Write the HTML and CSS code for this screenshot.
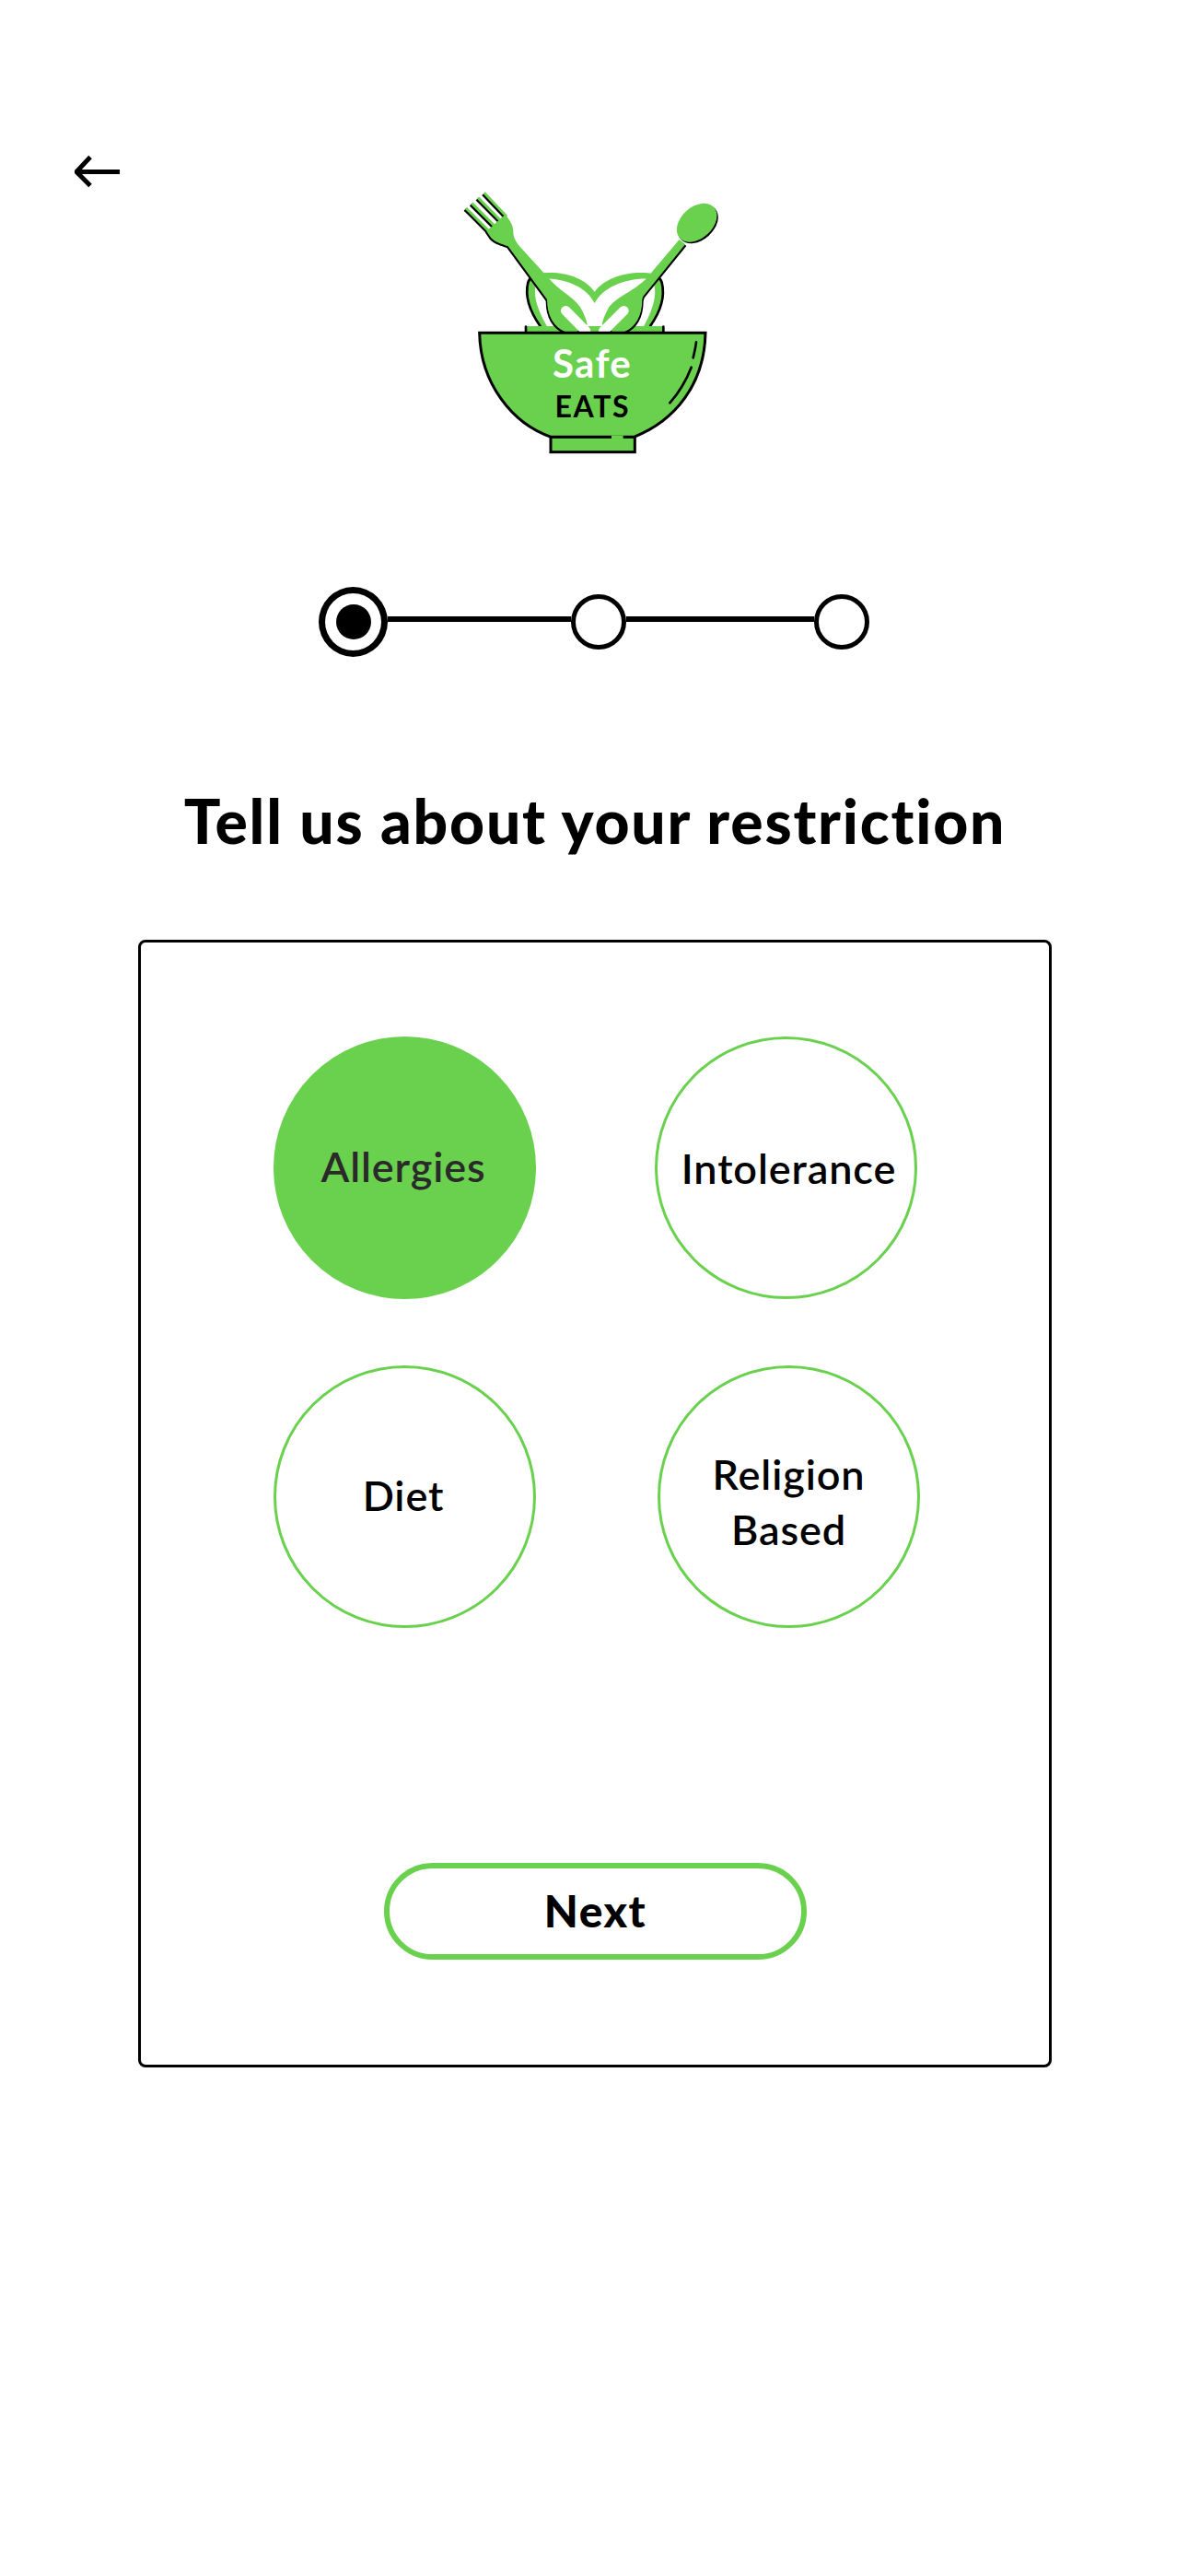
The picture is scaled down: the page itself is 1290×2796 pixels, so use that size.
FILE: index.html
```html
<!DOCTYPE html>
<html lang="en">
<head>
  <meta charset="UTF-8" />
  <meta name="viewport" content="width=device-width, initial-scale=1.0" />
  <title>Safe Eats</title>
  <link rel="stylesheet" href="styles.css">
</head>
<body>
  <header class="top">
    <svg class="back" viewBox="0 0 50 36" aria-label="Back">
      <path d="M2 18.500H49M17 2.500L2 18.500L17 33.500" />
    </svg>

    <svg class="logo" viewBox="0 0 990 960" role="img" aria-label="Safe Eats">
      <!-- leaves behind the bowl -->
      <path class="green" d="M355 505C320 460 300 400 312 350C318 330 340 318 370 318C440 315 500 340 527 380C555 340 620 315 690 318C720 318 742 330 745 350C755 400 735 460 705 505Z" />
      <path class="white" d="M380 505C345 450 322 390 338 350C345 340 360 336 385 338C440 342 500 365 527 417C555 365 620 342 675 338C700 336 712 340 718 350C735 390 712 450 680 505Z" />
      <path class="ink-line" d="M350 492C320 450 298 400 310 350C313 340 318 335 326 330M708 492C738 450 758 400 746 350C743 340 738 335 730 330" />
      <rect class="green" x="305" y="492" width="445" height="20" />
      <path class="ink-line" d="M303 494V512M751 494V512" />

      <!-- fork -->
      <g class="shadow-left">
        <path class="ink-tines" d="M108 108L190 190M127 92L205 170M147 74L220 148M167 58L240 135" />
        <path class="ink" d="M175 183L236 128C250 148 262 160 262 185C262 205 272 220 285 235L381 340C411 375 459 399 480 430C492 450 500 470 503 487L470 510H430C395 495 372 460 372 405L245 232C225 225 205 220 190 205Z" />
      </g>
      <path class="tines" d="M108 108L190 190M127 92L205 170M147 74L220 148M167 58L240 135" />
      <path class="green" d="M175 183L236 128C250 148 262 160 262 185C262 205 272 220 285 235L381 340C411 375 459 399 480 430C492 450 500 470 503 487L470 510H430C395 495 372 460 372 405L245 232C225 225 205 220 190 205Z" />
      <path class="slot" d="M433 442L498 508" />

      <!-- spoon -->
      <g class="shadow-right">
        <ellipse class="ink" cx="860" cy="155" rx="75" ry="51" transform="rotate(-42 860 155)" />
        <path class="ink" d="M803 210L822 226L685 395L682 405C682 460 660 495 625 510H585L551 487C554 470 562 450 574 430C600 395 660 375 697 335Z" />
      </g>
      <ellipse class="green" cx="860" cy="155" rx="75" ry="51" transform="rotate(-42 860 155)" />
      <path class="green" d="M803 210L822 226L685 395L682 405C682 460 660 495 625 510H585L551 487C554 470 562 450 574 430C600 395 660 375 697 335Z" />
      <path class="slot" d="M622 442L556 508" />

      <!-- bowl -->
      <rect class="bowl" x="384" y="852" width="274" height="50" />
      <path class="bowl" d="M152 514H888C885 680 790 800 655 853H385C260 810 155 680 152 514Z" />
      <path class="gap" d="M582 853H620" />
      <path class="ink-line" d="M858 544C856 560 852 578 848 595M842 626C825 670 800 710 772 742" />
      <text class="logo-safe" x="519" y="660">Safe</text>
      <text class="logo-eats" x="520" y="788">EATS</text>
    </svg>
  </header>

  <div class="stepper">
    <div class="step step-active"><span></span></div>
    <div class="line line-first"></div>
    <div class="step"></div>
    <div class="line line-second"></div>
    <div class="step"></div>
  </div>

  <h1 class="title">Tell us about your restriction</h1>

  <main class="card">
    <div class="row row-first">
      <div class="option option-selected allergies">Allergies</div>
      <div class="option intolerance">Intolerance</div>
    </div>
    <div class="row row-second">
      <div class="option diet">Diet</div>
      <div class="option religion">Religion<br>Based</div>
    </div>
    <button class="next">Next</button>
  </main>
</body>
</html>
```

FILE: styles.css
```css
body {
  font-family: Lato, "Open Sans", sans-serif;
  font-variant-ligatures: none;
  margin: 0;
  padding: 0;
  background: #fff;
  color: #000;
}

.top {
  display: flex;
  align-items: flex-start;
  padding: 168px 0 0 81px;
}

.back {
  width: 50px;
  height: 36px;
  fill: none;
  stroke: #000;
  stroke-width: 5;
}

.logo {
  width: 330px;
  height: 320px;
  margin: 22px 0 0 339px;
}

.green { fill: #6ad14f; }
.white { fill: #fff; }
.ink { fill: #000; }

.ink-line {
  fill: none;
  stroke: #000;
  stroke-width: 8;
  stroke-linecap: round;
}

.tines,
.ink-tines {
  fill: none;
  stroke: #6ad14f;
  stroke-width: 9;
}

.ink-tines { stroke: #000; }

.shadow-left { transform: translate(-4px, 5px); }
.shadow-right { transform: translate(4px, 5px); }

.slot {
  fill: none;
  stroke: #fff;
  stroke-width: 32;
  stroke-linecap: round;
}

.bowl {
  fill: #6ad14f;
  stroke: #000;
  stroke-width: 9;
}

.gap {
  fill: none;
  stroke: #6ad14f;
  stroke-width: 10;
}

.logo-safe {
  fill: #fff;
  font-size: 126px;
  font-weight: 700;
  letter-spacing: 4px;
  text-anchor: middle;
}

.logo-eats {
  fill: #000;
  font-size: 96px;
  font-weight: 700;
  letter-spacing: 5px;
  text-anchor: middle;
}

.stepper {
  display: flex;
  align-items: center;
  margin: 127px 0 0 346px;
}

.step {
  box-sizing: border-box;
  width: 60px;
  height: 60px;
  border: 5px solid #000;
  border-radius: 50%;
}

.step-active {
  display: flex;
  align-items: center;
  justify-content: center;
  width: 75px;
  height: 76px;
  border-width: 7px;
}

.step-active span {
  width: 38px;
  height: 38px;
  border-radius: 50%;
  background: #000;
}

.line {
  height: 6px;
  margin-bottom: 7px;
  background: #000;
}

.line-first { width: 199px; }
.line-second { width: 204px; }

.title {
  margin: 138px 0 0;
  padding-left: 2px;
  font-size: 66px;
  font-weight: 900;
  letter-spacing: 1.8px;
  line-height: 80px;
  text-align: center;
}

.card {
  box-sizing: border-box;
  width: 992px;
  height: 1224px;
  margin: 89px 0 0 150px;
  padding: 102px 0 0 144px;
  border: 3px solid #000;
  border-radius: 8px;
}

.row {
  display: flex;
}

.row-first { gap: 129px; }

.row-second {
  gap: 132px;
  margin-top: 72px;
}

.option {
  box-sizing: border-box;
  display: flex;
  align-items: center;
  justify-content: center;
  width: 285px;
  height: 285px;
  border: 3px solid #6ad14f;
  border-radius: 50%;
  font-size: 45px;
  font-weight: 600;
  letter-spacing: 0.9px;
  line-height: 60px;
  text-align: center;
}

.option-selected {
  background: #6ad14f;
  color: #2a2a2a;
}

.allergies { padding: 0 3px 3px 0; }
.intolerance { padding-left: 6px; }
.diet { padding: 0 3px 3px 0; }
.religion { padding-top: 11px; }

.next {
  display: block;
  width: 459px;
  height: 105px;
  margin: 255px 0 0 120px;
  padding: 0 0 2px;
  border: 6px solid #6ad14f;
  border-radius: 53px;
  background: #fff;
  color: #000;
  font-family: inherit;
  font-size: 48px;
  font-weight: 900;
  letter-spacing: 1.5px;
}
```
